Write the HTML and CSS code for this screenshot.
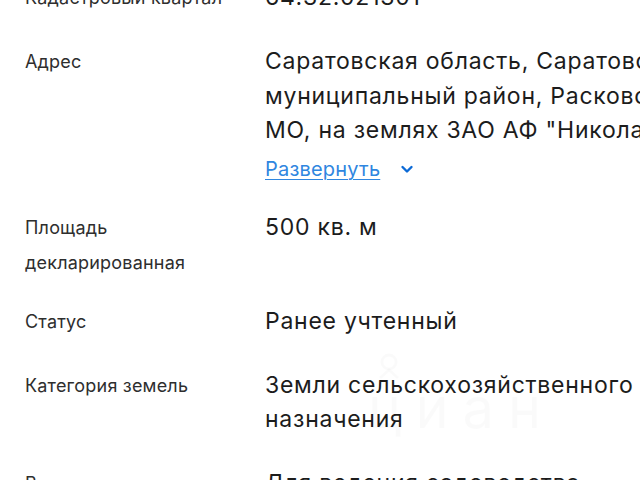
FILE: index.html
```html
<!DOCTYPE html>
<html lang="ru">
<head>
  <meta charset="UTF-8" />
  <meta name="viewport" content="width=device-width, initial-scale=1.0" />
  <title>Сведения об участке</title>
  <link rel="stylesheet" href="styles.css">
</head>
<body>
  <div class="details">
    <div class="row">
      <div class="label">Кадастровый квартал</div>
      <div class="value">64:32:021301</div>
    </div>

    <div class="row">
      <div class="label">Адрес</div>
      <div class="value">
        <div class="clamp">Саратовская область, Саратовский муниципальный район, Расковское <span class="nowrap">МО, на землях ЗАО АФ "Николаевское", участок 128</span></div>
        <a class="expand" href="#">
          <span class="expand-text">Развернуть</span>
          <svg class="chevron" width="16" height="16" viewBox="0 0 16 16">
            <path d="M3.5 6 L8 10.5 L12.5 6" fill="none" stroke="currentColor" stroke-width="2.4" stroke-linecap="round" stroke-linejoin="round"/>
          </svg>
        </a>
      </div>
    </div>

    <div class="row">
      <div class="label">Площадь<br>декларированная</div>
      <div class="value">500 кв. м</div>
    </div>

    <div class="row">
      <div class="label">Статус</div>
      <div class="value">Ранее учтенный</div>
    </div>

    <div class="row">
      <div class="label">Категория земель</div>
      <div class="value">Земли сельскохозяйственного назначения</div>
    </div>

    <div class="row row-last">
      <div class="label">Вид разрешенного использования</div>
      <div class="value">Для ведения садоводства</div>
    </div>
  </div>

  <!-- watermark over the screenshot -->
  <div class="watermark">
    <svg class="watermark-pin" width="26" height="30" viewBox="0 0 26 30">
      <circle cx="13" cy="10" r="7" fill="none" stroke="currentColor" stroke-width="3"/>
      <path d="M4 26 L13 18 L22 26" fill="none" stroke="currentColor" stroke-width="3"/>
    </svg>
    <span class="watermark-text">циан</span>
  </div>
</body>
</html>
```

FILE: styles.css
```css
body {
  margin: 0;
  background: #fff;
  font-family: 'Inter', 'Roboto', sans-serif;
  overflow: hidden;
  position: relative;
  height: 480px;
}

.details {
  margin-top: -20px;
  width: 720px;
}

.row {
  display: grid;
  grid-template-columns: 265px minmax(0, 1fr);
  min-height: 40px;
  padding-bottom: 24px;
}

.row-last {
  margin-top: 5px;
}

.label {
  padding-left: 25px;
  padding-right: 20px;
  font-size: 18px;
  line-height: 35px;
  letter-spacing: 0.2px;
  color: #2e2e2e;
}

.value {
  font-size: 23px;
  line-height: 34.5px;
  letter-spacing: 0.75px;
  color: #1c1c1c;
}

/* three lines visible, rest hidden until expanded */
.clamp {
  max-height: 103.5px;
  overflow: hidden;
}

.nowrap {
  white-space: nowrap;
}

.expand {
  display: flex;
  align-items: center;
  gap: 19px;
  margin-top: 4px;
  line-height: 34px;
  font-size: 20px;
  letter-spacing: 0.2px;
  color: #2f86e0;
  text-decoration: none;
}

.expand-text {
  text-decoration: underline;
  text-underline-offset: 3px;
  text-decoration-thickness: 1px;
}

.chevron {
  color: #0c6ad6;
}

.watermark {
  position: absolute;
  left: 368px;
  top: 352px;
  color: rgba(0, 0, 0, 0.02);
  pointer-events: none;
}

.watermark-pin {
  display: block;
  margin-left: 8px;
}

.watermark-text {
  display: block;
  margin-top: -2px;
  font-size: 56px;
  line-height: 56px;
  letter-spacing: 14px;
  font-family: 'Inter', sans-serif;
}
```
